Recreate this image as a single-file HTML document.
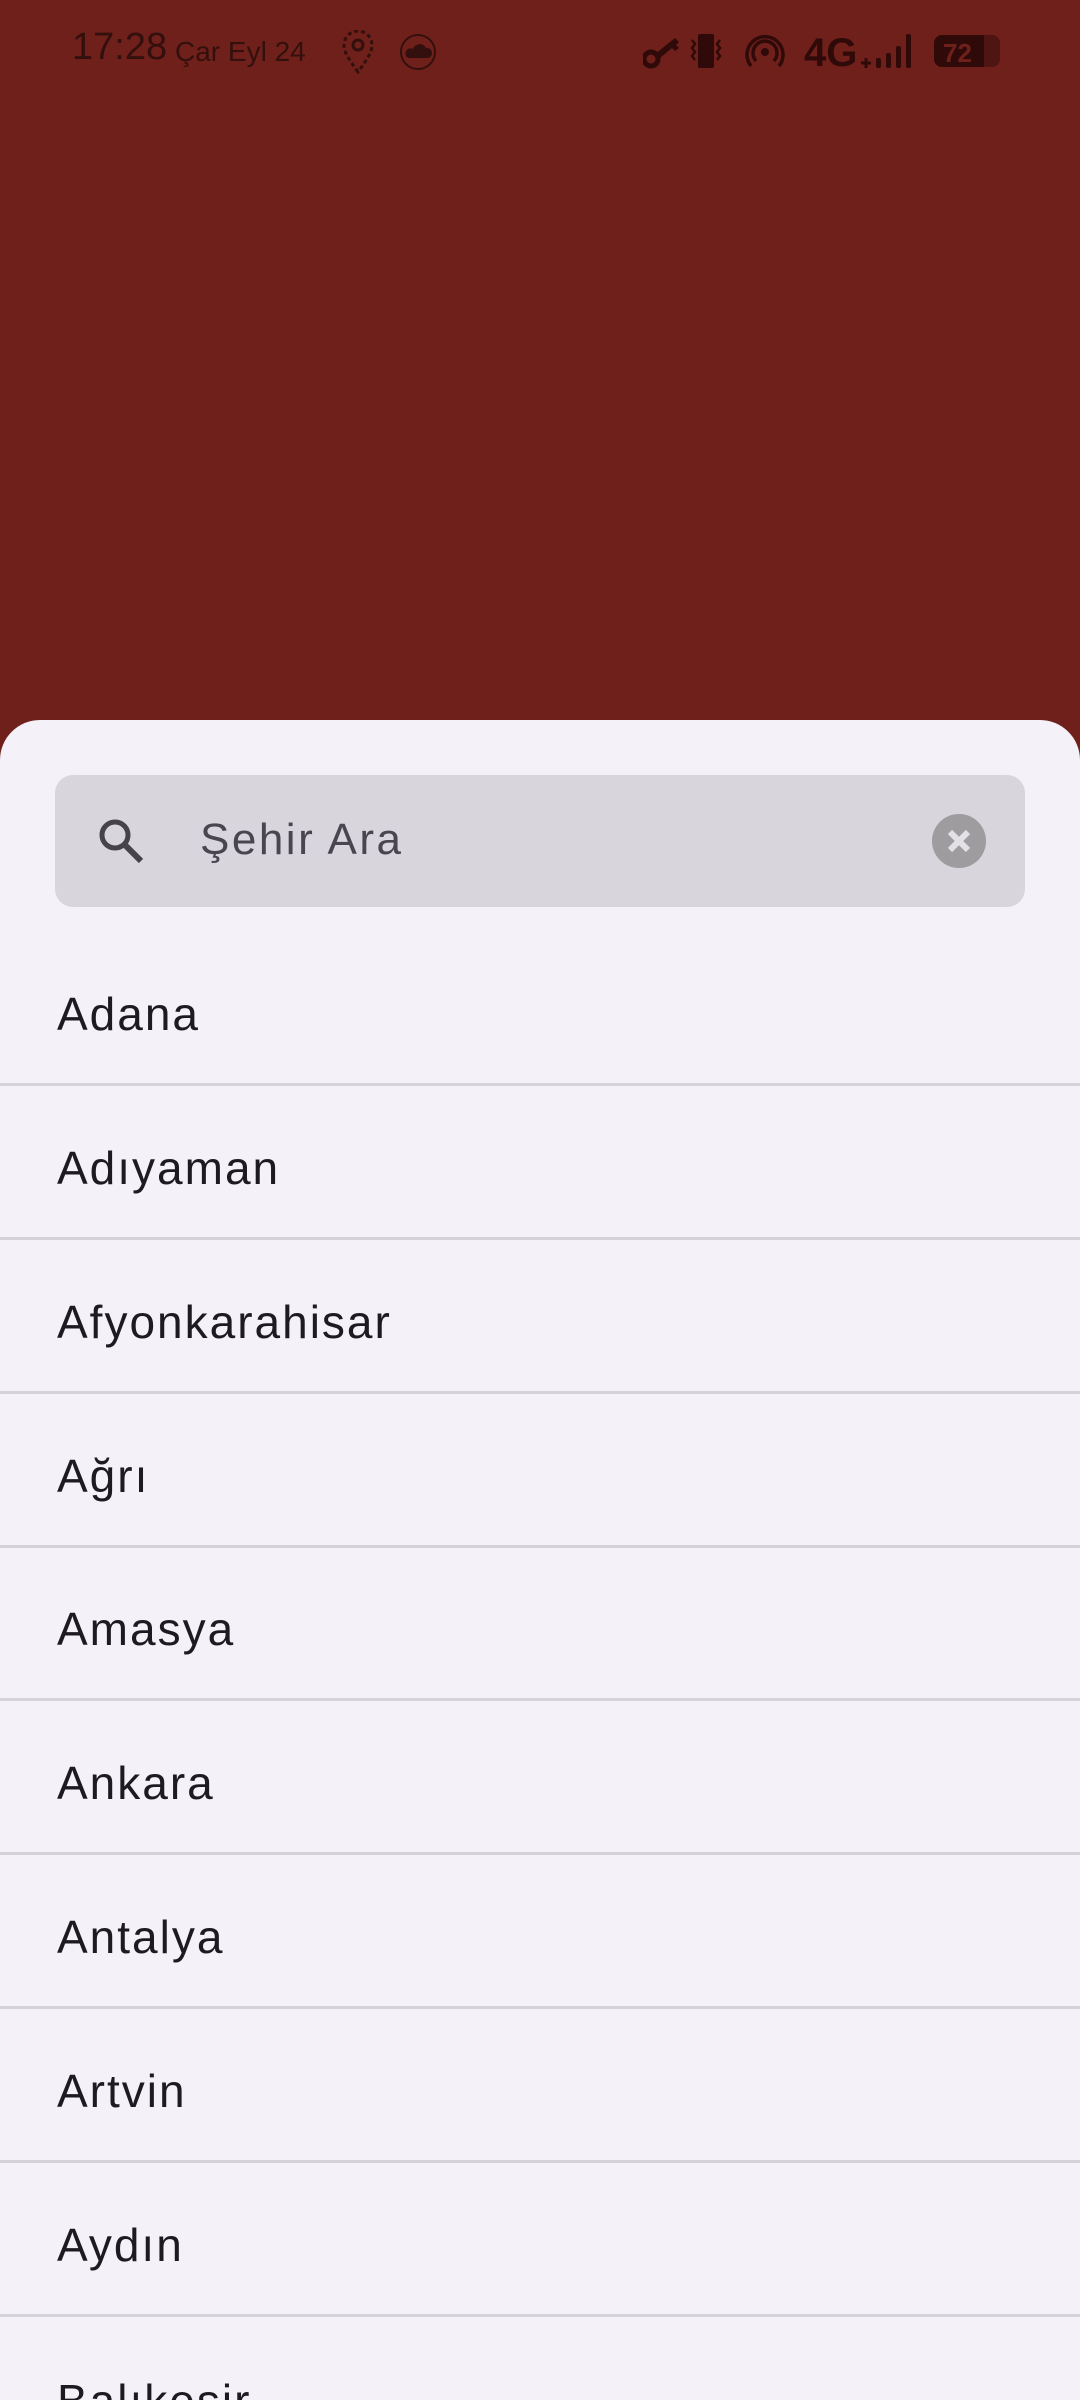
<!DOCTYPE html>
<html style="width:1080px;height:2400px;overflow:hidden"><head><meta charset="utf-8"><style>
*{margin:0;padding:0;box-sizing:border-box}
body{width:1080px;height:2400px;overflow:hidden;background:#6f201b;font-family:"Liberation Sans",sans-serif;position:relative}
.st{position:absolute;color:#33100d;}
.sheet{position:absolute;left:0;top:720px;width:1080px;height:1680px;background:#f5f1f8;border-radius:40px 40px 0 0;overflow:hidden}
.search{position:absolute;left:55px;top:775px;width:970px;height:132px;background:#d8d5dc;border-radius:18px}
.row{position:absolute;left:0;width:1080px;height:154px;border-bottom:3px solid #d6d2da}
.row span{position:absolute;left:57px;top:55px;font-size:46px;color:#1d1b20;letter-spacing:2px}
</style></head><body>
<div class="st" style="left:72px;top:26px;font-size:38px">17:28</div>
<div class="st" style="left:175px;top:36px;font-size:28px">Çar Eyl 24</div>
<svg class="st" style="left:340px;top:30px" width="36" height="44" viewBox="0 0 36 44"><path d="M18 42 C8 28 4 22 4 15 A14 14 0 0 1 32 15 C32 22 28 28 18 42Z" fill="none" stroke="#33100d" stroke-width="3" stroke-dasharray="4 3"/><circle cx="18" cy="15" r="5" fill="none" stroke="#33100d" stroke-width="3"/></svg>
<svg class="st" style="left:398px;top:32px" width="40" height="40" viewBox="0 0 40 40"><circle cx="20" cy="20" r="17" fill="none" stroke="#33100d" stroke-width="2"/><path d="M10 26h20a5 5 0 0 0-2-10 7 7 0 0 0-13 1 5 5 0 0 0-5 9z" fill="#33100d"/></svg>
<svg class="st" style="left:643px;top:32px" width="360" height="38" viewBox="0 0 360 38">
<g fill="#2f0a08">
<circle cx="8" cy="27" r="7" fill="none" stroke="#2f0a08" stroke-width="5"/><path d="M12 22 L32 6 l4 4 -3 3 3 3 -4 3 -3-3 -12 10z"/>
<rect x="55" y="2" width="16" height="34" rx="2"/>
<path d="M49 8l3 4-3 4 3 4-3 4 3 4M77 8l-3 4 3 4-3 4 3 4-3 4" fill="none" stroke="#2f0a08" stroke-width="2.5"/>
<circle cx="122" cy="20" r="4"/>
<path d="M113 29a12 12 0 1 1 18 0M108 34a18 18 0 1 1 28 0" fill="none" stroke="#2f0a08" stroke-width="3.5"/>
<text x="161" y="34" font-size="40" font-weight="bold" font-family="Liberation Sans">4G</text>
<path d="M218 31h10M223 26v10" stroke="#2f0a08" stroke-width="3"/>
<rect x="233" y="26" width="5" height="10" rx="2"/><rect x="243" y="21" width="5" height="15" rx="2"/><rect x="253" y="14" width="5" height="22" rx="2"/><rect x="263" y="2" width="5" height="34" rx="2"/>
<rect x="291" y="3" width="66" height="32" rx="8" fill="#4e1512"/><path d="M299 3h42v32h-42a8 8 0 0 1-8-8v-16a8 8 0 0 1 8-8z"/>
<text x="300" y="30" font-size="26" font-weight="bold" fill="#6f201b" font-family="Liberation Sans">72</text>
</g></svg>
<div class="sheet">
<div class="row" style="top:212px"><span>Adana</span></div>
<div class="row" style="top:366px"><span>Adıyaman</span></div>
<div class="row" style="top:520px"><span>Afyonkarahisar</span></div>
<div class="row" style="top:674px"><span>Ağrı</span></div>
<div class="row" style="top:827px"><span>Amasya</span></div>
<div class="row" style="top:981px"><span>Ankara</span></div>
<div class="row" style="top:1135px"><span>Antalya</span></div>
<div class="row" style="top:1289px"><span>Artvin</span></div>
<div class="row" style="top:1443px"><span>Aydın</span></div>
<div class="row" style="top:1599px;height:81px;border:none"><span>Balıkesir</span></div>
</div>
<div class="search">
<svg style="position:absolute;left:40px;top:40px" width="52" height="52" viewBox="0 0 52 52"><circle cx="20" cy="20" r="13" fill="none" stroke="#46434b" stroke-width="5"/><path d="M29 29l17 17" stroke="#46434b" stroke-width="6"/></svg>
<div style="position:absolute;left:145px;top:40px;font-size:44px;color:#4a4650;letter-spacing:2.5px">Şehir Ara</div>
<svg style="position:absolute;left:876px;top:38px" width="56" height="56" viewBox="0 0 56 56"><circle cx="28" cy="28" r="27" fill="#9e9c9f"/><path d="M19 19l18 18M37 19l-18 18" stroke="#e4e1e6" stroke-width="6"/></svg>
</div>
</body></html>
